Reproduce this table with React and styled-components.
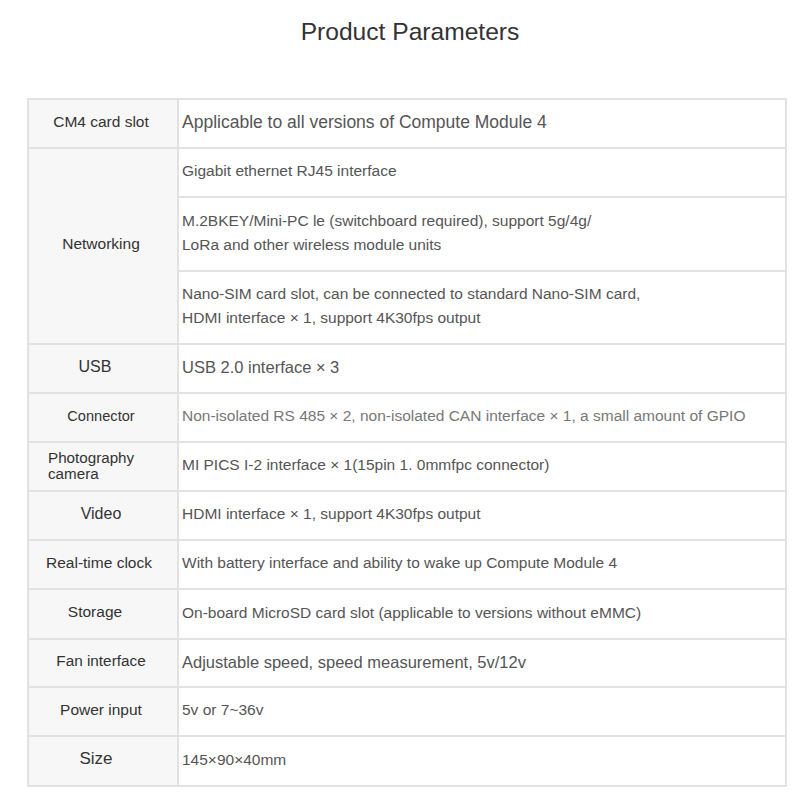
import React from 'react'
import styled, { createGlobalStyle } from 'styled-components'

const GlobalStyle = createGlobalStyle`
  html, body {
    margin: 0;
    padding: 0;
    background: #fff;
  }
  * {
    box-sizing: border-box;
  }
`

const Page = styled.div`
  width: 800px;
  height: 800px;
  font-family: "Liberation Sans", Arial, sans-serif;
  color: #555;
  overflow: hidden;
`

const Title = styled.h1`
  margin: 0;
  padding: 18px 0 0 20px;
  height: 98px;
  text-align: center;
  font-size: 24.6px;
  line-height: 28px;
  font-weight: 400;
  color: #333;
`

const Table = styled.div`
  margin-left: 27px;
  width: 760px;
  border-top: 2px solid #e2e2e2;
  border-left: 2px solid #e2e2e2;
`

const Row = styled.div`
  display: grid;
  grid-template-columns: 150px 1fr;
  min-height: ${p => p.h || 49}px;
`

const Label = styled.div`
  display: flex;
  align-items: center;
  justify-content: ${p => (p.left ? 'flex-start' : 'center')};
  padding: ${p => (p.left ? '0 0 2px 19px' : `0 ${4 + (p.shift || 0)}px 4px 0`)};
  background: #f7f7f7;
  border-right: 2px solid #e2e2e2;
  border-bottom: 2px solid #e2e2e2;
  font-size: ${p => p.size || 15.5}px;
  line-height: ${p => (p.left ? '16px' : '20px')};
  color: #333;
`

const Value = styled.div`
  display: flex;
  align-items: center;
  padding: 0 8px 3px 3px;
  border-right: 2px solid #e2e2e2;
  border-bottom: 2px solid #e2e2e2;
  font-size: ${p => p.size || 15.5}px;
  line-height: 24px;
  color: ${p => p.tone || '#555'};
  min-height: ${p => p.h || 49}px;
`

const Stack = styled.div`
  display: flex;
  flex-direction: column;
`

const rows = [
  { label: 'CM4 card slot', value: 'Applicable to all versions of Compute Module 4', size: 15.5, vsize: 17.5 },
  { label: 'USB', value: 'USB 2.0 interface × 3', size: 16, vsize: 16.5, shift: 12 },
  { label: 'Connector', value: 'Non-isolated RS 485 × 2, non-isolated CAN interface × 1, a small amount of GPIO', size: 14.6, tone: '#777' },
  { label: 'Photography\ncamera', value: 'MI PICS I-2 interface × 1(15pin 1. 0mmfpc connector)', size: 15.2, left: true },
  { label: 'Video', value: 'HDMI interface × 1, support 4K30fps output', size: 16 },
  { label: 'Real-time clock', value: 'With battery interface and ability to wake up Compute Module 4', size: 15.5, shift: 4 },
  { label: 'Storage', value: 'On-board MicroSD card slot (applicable to versions without eMMC)', size: 15.5, h: 50, shift: 12 },
  { label: 'Fan interface', value: 'Adjustable speed, speed measurement, 5v/12v', size: 15.3, vsize: 16.5, h: 48 },
  { label: 'Power input', value: '5v or 7~36v', size: 15.5 },
  { label: 'Size', value: '145×90×40mm', size: 17, h: 50, shift: 10 },
]

const networking = [
  { text: 'Gigabit ethernet RJ45 interface', h: 49 },
  { text: 'M.2BKEY/Mini-PC le (switchboard required), support 5g/4g/\nLoRa and other wireless module units', h: 74 },
  { text: 'Nano-SIM card slot, can be connected to standard Nano-SIM card,\nHDMI interface × 1, support 4K30fps output', h: 73 },
]

const Lines = ({ text }) =>
  text.split('\n').map((t, i) => (
    <React.Fragment key={i}>
      {i > 0 && <br />}
      {t}
    </React.Fragment>
  ))

export default function App() {
  return (
    <Page>
      <GlobalStyle />
      <Title>Product Parameters</Title>
      <Table>
        <Row>
          <Label size={rows[0].size}>{rows[0].label}</Label>
          <Value size={rows[0].vsize}>{rows[0].value}</Value>
        </Row>
        <Row h={196}>
          <Label>Networking</Label>
          <Stack>
            {networking.map(n => (
              <Value key={n.text} h={n.h}>
                <span>
                  <Lines text={n.text} />
                </span>
              </Value>
            ))}
          </Stack>
        </Row>
        {rows.slice(1).map(r => (
          <Row key={r.label} h={r.h}>
            <Label size={r.size} left={r.left} shift={r.shift}>
              <span>
                <Lines text={r.label} />
              </span>
            </Label>
            <Value size={r.vsize} tone={r.tone} h={r.h}>
              {r.value}
            </Value>
          </Row>
        ))}
      </Table>
    </Page>
  )
}
